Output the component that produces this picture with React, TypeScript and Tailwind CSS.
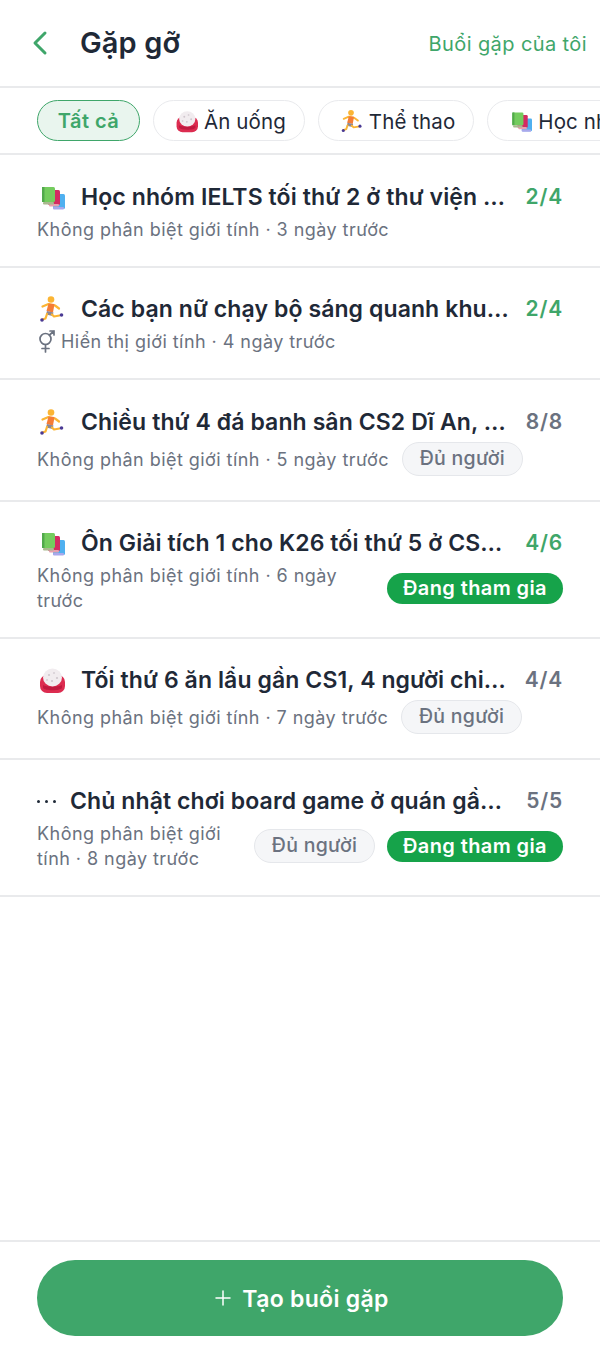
import { ChevronLeft, Plus } from "lucide-react";

type Kind = "book" | "rice" | "run" | "more";

const meetups: {
  kind: Kind;
  title: string;
  meta: string;
  count: string;
  open: boolean;
  full?: boolean;
  joined?: boolean;
  gender?: boolean;
  tall?: boolean;
}[] = [
  { kind: "book", title: "Học nhóm IELTS tối thứ 2 ở thư viện CS1 cùng nhau", meta: "Không phân biệt giới tính · 3 ngày trước", count: "2/4", open: true },
  { kind: "run", title: "Các bạn nữ chạy bộ sáng quanh khu ký túc xá", meta: "Hiển thị giới tính · 4 ngày trước", count: "2/4", open: true, gender: true },
  { kind: "run", title: "Chiều thứ 4 đá banh sân CS2 Dĩ An, thiếu người", meta: "Không phân biệt giới tính · 5 ngày trước", count: "8/8", open: false, full: true, tall: true },
  { kind: "book", title: "Ôn Giải tích 1 cho K26 tối thứ 5 ở CS1 thư viện", meta: "Không phân biệt giới tính · 6 ngày trước", count: "4/6", open: true, joined: true },
  { kind: "rice", title: "Tối thứ 6 ăn lẩu gần CS1, 4 người chia tiền", meta: "Không phân biệt giới tính · 7 ngày trước", count: "4/4", open: false, full: true },
  { kind: "more", title: "Chủ nhật chơi board game ở quán gần trường nhé", meta: "Không phân biệt giới tính · 8 ngày trước", count: "5/5", open: false, full: true, joined: true },
];

function BooksIcon({ size = 28 }: { size?: number }) {
  return (
    <svg width={size} height={size} viewBox="0 0 28 28" className="shrink-0">
      <rect x="16" y="11" width="12" height="15" rx="1.500" fill="#4fb0f0" />
      <rect x="16" y="24" width="11" height="2.500" rx="1" fill="#a9a8ec" />
      <rect x="11" y="7" width="12" height="15" rx="1.500" fill="#d42a62" />
      <rect x="12" y="21" width="10" height="2.500" rx="1" fill="#e8a0b0" />
      <rect x="5" y="4" width="13" height="15" rx="1.500" fill="#74cc5e" />
      <rect x="5" y="4" width="2.500" height="15" fill="#52a94c" />
      <rect x="6" y="19" width="11" height="2.500" rx="1" fill="#a9b88e" />
    </svg>
  );
}

function RiceIcon({ size = 28 }: { size?: number }) {
  return (
    <svg width={size} height={size} viewBox="0 0 28 28" className="shrink-0">
      <rect x="3" y="9" width="25" height="18" rx="7" fill="#dc2c50" />
      <path d="M6 19c3 2 16 2 19 0v3c-2 3-17 3-19 0z" fill="#c0193f" />
      <ellipse cx="15.500" cy="11.500" rx="9.500" ry="9" fill="#f1ecef" />
      <circle cx="12" cy="9" r="1.100" fill="#cfc6cd" />
      <circle cx="17" cy="7" r="1.100" fill="#d8d0d6" />
      <circle cx="20" cy="12" r="1.100" fill="#cfc6cd" />
      <circle cx="10" cy="14" r="1.100" fill="#d8d0d6" />
      <circle cx="15" cy="15" r="1.100" fill="#cfc6cd" />
    </svg>
  );
}

function RunnerIcon({ size = 28 }: { size?: number }) {
  return (
    <svg width={size} height={size} viewBox="0 0 28 28" className="shrink-0">
      <circle cx="14" cy="4.500" r="3.300" fill="#fbb534" />
      <path d="M5.500 11.500l6-2.500 6.500 1.500 4 3" fill="none" stroke="#fbb534" strokeWidth="2.200" strokeLinecap="round" strokeLinejoin="round" />
      <path d="M11.500 8.500l6 .5-1.500 8.500-6.500-1.500z" fill="#f57c36" />
      <path d="M10 16l6.500 1.500-1 3.500-6.500-1.500z" fill="#8d8793" />
      <path d="M10 19l-1.500 4.500-3 1" fill="none" stroke="#fbb534" strokeWidth="2.200" strokeLinecap="round" strokeLinejoin="round" />
      <path d="M15 19.500l2 2 5.500-1" fill="none" stroke="#fbb534" strokeWidth="2.200" strokeLinecap="round" strokeLinejoin="round" />
      <circle cx="5" cy="25" r="1.800" fill="#4a3a94" />
      <circle cx="24.500" cy="20" r="1.800" fill="#4a3a94" />
    </svg>
  );
}

function GenderIcon() {
  return (
    <svg width="20" height="24" viewBox="0 0 20 24" fill="none" stroke="#6b7280" strokeWidth="1.700" strokeLinecap="round" className="mr-[4px] shrink-0">
      <circle cx="8.500" cy="9" r="5.500" />
      <path d="M8.500 14.500V22M5 18.500h7M12.500 5L17 1M13 1h4v4" />
    </svg>
  );
}

function KindIcon({ kind }: { kind: Kind }) {
  if (kind === "book") return <BooksIcon />;
  if (kind === "rice") return <RiceIcon />;
  if (kind === "run") return <RunnerIcon />;
  return (
    <span className="flex w-[19px] shrink-0 justify-between">
      <i className="h-[3px] w-[3px] rounded-full bg-[#1f2937]" />
      <i className="h-[3px] w-[3px] rounded-full bg-[#1f2937]" />
      <i className="h-[3px] w-[3px] rounded-full bg-[#1f2937]" />
    </span>
  );
}

function Chip({ label, icon, active }: { label: string; icon?: React.ReactNode; active?: boolean }) {
  if (active) {
    return (
      <div className="flex h-[41px] w-[103px] shrink-0 items-center justify-center rounded-full border-[1.500px] border-[#3fa66a] bg-[#e9f5ee] text-[20px] font-semibold tracking-[0.5px] text-[#3fa66a]">
        {label}
      </div>
    );
  }
  return (
    <div className="flex h-[41px] shrink-0 items-center gap-[6px] rounded-full border-[1.500px] border-[#e9eaed] bg-white pl-[20px] pr-[18px] text-[20.500px] text-[#1f2937]">
      {icon}
      <span className="pt-[3px]">{label}</span>
    </div>
  );
}

export default function App() {
  return (
    <div className="flex h-[1354px] w-[600px] flex-col overflow-hidden bg-white font-['Inter','Noto_Sans',sans-serif] tracking-[0.1px]">
      <header className="flex h-[88px] shrink-0 items-center border-b-2 border-[#e9eaec] pl-[20px] pr-[13px]">
        <ChevronLeft size={40} strokeWidth={1.800} className="text-[#3fa66a]" />
        <h1 className="ml-[20px] text-[29px] font-semibold text-[#1f2937]">Gặp gỡ</h1>
        <span className="ml-auto pt-[2px] text-[20px] tracking-[0.4px] text-[#3fa66a]">Buổi gặp của tôi</span>
      </header>

      <div className="flex h-[67px] shrink-0 items-center gap-[13px] overflow-hidden border-b-2 border-[#e9eaec] pl-[37px]">
        <Chip label="Tất cả" active />
        <Chip label="Ăn uống" icon={<RiceIcon size={24} />} />
        <Chip label="Thể thao" icon={<RunnerIcon size={24} />} />
        <Chip label="Học nhóm" icon={<BooksIcon size={24} />} />
      </div>

      <div className="mt-[1px] flex-1">
        {meetups.map((m) => (
          <div key={m.title + m.count} className={m.tall ? "border-b-2 border-[#e9eaec] px-[37px] pb-[24px] pt-[25px]" : "border-b-2 border-[#e9eaec] px-[37px] pb-[24px] pt-[24px]"}>
            <div className="flex h-[34px] items-center">
              <KindIcon kind={m.kind} />
              <span className={m.kind === "more" ? "ml-[14px] min-w-0 flex-1 truncate text-[23px] font-semibold text-[#1f2937]" : "ml-[16px] min-w-0 flex-1 truncate text-[23px] font-semibold text-[#1f2937]"}>
                {m.title}
              </span>
              <span className={m.open ? "ml-[16px] shrink-0 text-[21px] font-semibold tracking-[0.8px] text-[#3fa66a]" : "ml-[16px] shrink-0 text-[21px] font-semibold tracking-[0.8px] text-[#6b7280]"}>
                {m.count}
              </span>
            </div>
            <div className="mt-[3px] flex items-center">
              {m.gender ? <GenderIcon /> : null}
              <span className="min-w-0 text-[18px] leading-[25px] tracking-[0.45px] text-[#6b7280]">{m.meta}</span>
              {m.full ? (
                <span className="ml-[13px] flex h-[34px] w-[121px] shrink-0 items-center justify-center rounded-full border-[1.500px] border-[#e5e7eb] bg-[#f5f6f8] text-[19.500px] font-medium tracking-[0.3px] text-[#6b7280]">
                  Đủ người
                </span>
              ) : null}
              {m.joined ? (
                <span className="ml-[12px] flex h-[31px] w-[176px] shrink-0 items-center justify-center rounded-full bg-[#16a34a] text-[20px] font-semibold tracking-[0.4px] text-white">
                  Đang tham gia
                </span>
              ) : null}
            </div>
          </div>
        ))}
      </div>

      <footer className="h-[114px] shrink-0 border-t-2 border-[#e9eaec] px-[37px] pt-[18px]">
        <button className="flex h-[76px] w-full items-center justify-center gap-[7px] rounded-full bg-[#3fa66a] text-[23px] font-semibold tracking-[0.3px] text-white">
          <Plus size={24} strokeWidth={1.500} />
          <span className="pt-[3px]">Tạo buổi gặp</span>
        </button>
      </footer>
    </div>
  );
}
